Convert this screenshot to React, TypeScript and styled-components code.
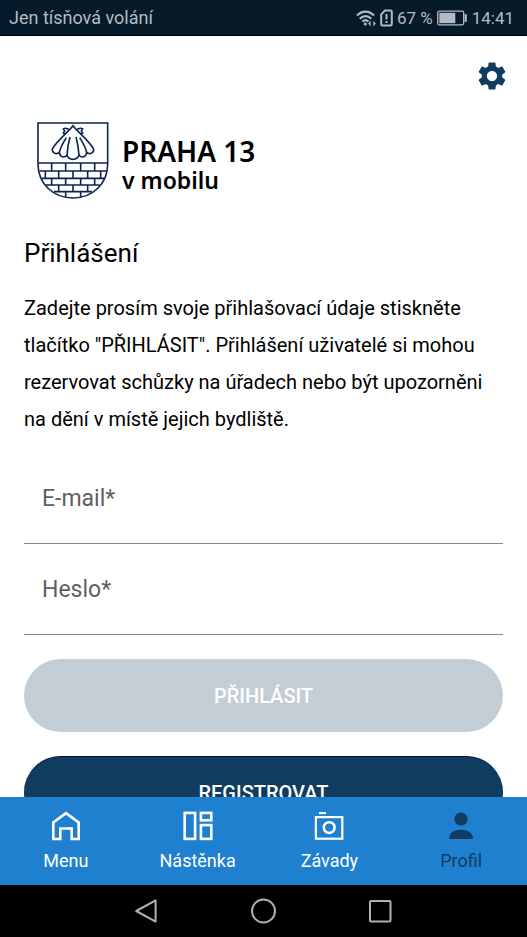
import React from "react";
import styled, { createGlobalStyle, css } from "styled-components";
import { MdSettings } from "react-icons/md";

const navy = "#103c60";
const blue = "#1f80cf";
const statusGrey = "#b4bac2";

const GlobalStyle = createGlobalStyle`
  *, *::before, *::after { box-sizing: border-box; }
  body { margin: 0; background: #fff; font-family: Roboto, sans-serif; color: #000; }
  button, input { font-family: inherit; }
`;

const Screen = styled.div`
  display: flex;
  flex-direction: column;
  height: 100vh;
`;

const StatusBar = styled.header`
  display: flex;
  flex: none;
  align-items: center;
  justify-content: space-between;
  height: 36px;
  padding: 0 13px 0 9px;
  border-bottom: 1px solid #000;
  background: #061a2a;
  color: ${statusGrey};
  font-size: 18px;
  line-height: 24px;
`;

const StatusItems = styled.div`
  display: flex;
  align-items: center;
  gap: 4px;
  font-size: 17px;
`;

const Content = styled.main`
  display: flex;
  flex: 1;
  flex-direction: column;
  min-height: 0;
  overflow-y: auto;
  scrollbar-width: none;
  padding: 23px 24px 24px;

  & > * { flex: none; }
`;

const SettingsButton = styled.button`
  display: grid;
  align-self: flex-end;
  margin-right: -6px;
  padding: 0;
  border: 0;
  background: none;
  color: ${navy};
  cursor: pointer;
`;

const Brand = styled.div`
  display: flex;
  align-items: center;
  gap: 13px;
  margin: 29px 0 0 13px;
`;

const BrandText = styled.div`
  display: flex;
  flex-direction: column;
  padding-top: 6px;
  font-family: "Noto Sans", sans-serif;
  font-weight: 600;
`;

const BrandName = styled.span`
  font-size: 28px;
  line-height: 32px;
`;

const BrandSub = styled.span`
  font-size: 23px;
  line-height: 26px;
`;

const Title = styled.h1`
  margin: 38px 0 0;
  font-size: 26px;
  font-weight: 400;
  line-height: 32px;
`;

const Intro = styled.p`
  margin: 21px 0 15px;
  font-size: 20px;
  line-height: 37px;
`;

const Form = styled.form`
  display: flex;
  flex-direction: column;
`;

const Field = styled.div`
  display: grid;
  grid-template-areas: "cell";
  height: 91px;
  padding-top: 2px;
  border-bottom: 1px solid #8a8a8a;
`;

const FieldInput = styled.input`
  grid-area: cell;
  width: 100%;
  padding: 0 18px;
  border: 0;
  outline: 0;
  background: none;
  font-size: 23px;
`;

const FieldLabel = styled.label`
  grid-area: cell;
  align-self: center;
  padding: 0 18px;
  color: #5f5f5f;
  font-size: 23px;
  line-height: 32px;
  pointer-events: none;

  ${FieldInput}:not(:placeholder-shown) + & {
    align-self: start;
    font-size: 16px;
  }
`;

const PillButton = styled.button<{ $variant: "muted" | "solid" }>`
  height: 73px;
  margin-top: 24px;
  padding: 0;
  border: 0;
  border-radius: 37px;
  color: #fff;
  font-size: 20px;
  font-weight: 500;
  line-height: 24px;
  ${({ $variant }) =>
    $variant === "muted"
      ? css`background: #c3cdd6;`
      : css`background: ${navy}; border-top: 1px solid #02104a; cursor: pointer;`}
`;

const TabBar = styled.nav`
  display: grid;
  flex: none;
  grid-template-columns: repeat(4, 1fr);
  height: 88px;
  background: ${blue};
`;

const Tab = styled.a<{ $active?: boolean }>`
  display: flex;
  flex-direction: column;
  align-items: center;
  gap: 8px;
  padding-top: 14px;
  color: ${({ $active }) => ($active ? navy : "#fff")};
  font-size: 18px;
  line-height: 24px;
  text-decoration: none;
`;

const SystemBar = styled.div`
  display: flex;
  flex: none;
  align-items: center;
  justify-content: center;
  gap: 89px;
  height: 52px;
  background: #000;
`;

const SystemButton = styled.button`
  display: grid;
  padding: 0;
  border: 0;
  background: none;
  color: #b0b0b0;
`;

const WifiIcon = () => (
  <svg width="20" height="18" viewBox="0 0 20 18" fill="none" stroke="currentColor" strokeWidth="2.2" aria-hidden="true">
    <path d="M1 6.5C6 1.2 13 1.2 18 6.5M3.8 9.8c3.5-3.6 8-3.6 11.4 0M6.5 12.6c2-1.9 4-1.9 6 0" />
    <circle cx="9.3" cy="15" r="1.6" fill="currentColor" stroke="none" />
    <path d="M12.2 14.6l2.4-2.8v5.6zM19.8 14.6l-2.4-2.8v5.6z" fill="currentColor" stroke="none" />
  </svg>
);

const SimIcon = () => (
  <svg width="13" height="18" viewBox="0 0 13 18" fill="none" stroke="currentColor" strokeWidth="2" aria-hidden="true">
    <path d="M5 1.5h5.5q1.3 0 1.3 1.3v12.4q0 1.3-1.3 1.3h-8q-1.3 0-1.3-1.3V5.3z" />
    <path d="M6.5 5v5.5M6.5 12v2" />
  </svg>
);

const BatteryIcon = () => (
  <svg width="31" height="16" viewBox="0 0 31 16" aria-hidden="true">
    <rect x="0.7" y="1.2" width="26" height="13.6" rx="1.5" fill="none" stroke="currentColor" strokeWidth="1.3" />
    <rect x="2.3" y="2.8" width="16" height="10.4" fill="currentColor" />
    <rect x="27.6" y="4.2" width="2.2" height="7.6" fill="currentColor" />
  </svg>
);

const Shield = () => (
  <svg width="72" height="77" viewBox="21 22 216 231" fill="none" stroke="#0d2350" strokeWidth="4.8" aria-hidden="true">
    <path d="M24 25H233V148C233 208 187 250 129 250S24 208 24 148Z" />
    <path d="M25 145H232M28 169H229M35 191H222M48 211H209M72 231H186" />
    <path d="M65 145v24M107 145v24M152 145v24M194 145v24M46 169v22M86 169v22M129 169v22M173 169v22M212 169v22M65 191v20M107 191v20M152 191v20M194 191v20M86 211v20M129 211v20M173 211v20M107 231v17M152 231v17" />
    <path d="M129 33C116 50 82 78 68 101C63 112 78 122 88 113C89 127 103 131 111 122C117 138 141 138 147 122C155 131 169 127 170 113C180 122 195 112 190 101C176 78 142 50 129 33Z" />
    <path d="M88 113C92 96 102 80 109 69M111 122C112 104 115 85 120 67M147 122C146 104 143 85 138 67M170 113C166 96 156 80 149 69" />
    <path d="M119 46C111 40 104 40 100 43L104 49L100 55L108 58M139 46C147 40 154 40 158 43L154 49L158 55L150 58" />
  </svg>
);

const HomeIcon = () => (
  <svg width="30" height="30" viewBox="0 0 30 30" fill="none" stroke="currentColor" strokeWidth="2.6" aria-hidden="true">
    <path d="M2.3 28V11.5L15 2.2L27.7 11.5V28H20.7V17.5H9.3V28Z" />
  </svg>
);

const BoardIcon = () => (
  <svg width="30" height="30" viewBox="0 0 30 30" fill="none" stroke="currentColor" strokeWidth="2.6" aria-hidden="true">
    <rect x="1.7" y="1.9" width="10.4" height="26" />
    <rect x="17.9" y="1.9" width="10.4" height="7.4" />
    <rect x="17.9" y="14.1" width="10.4" height="13.8" />
  </svg>
);

const CameraIcon = () => (
  <svg width="30" height="30" viewBox="0 0 30 30" fill="none" stroke="currentColor" strokeWidth="2.2" aria-hidden="true">
    <rect x="1.9" y="6.1" width="26.4" height="21.6" />
    <path d="M5 2.1h7" />
    <circle cx="15.2" cy="16.6" r="5.4" strokeWidth="2.6" />
  </svg>
);

const PersonIcon = () => (
  <svg width="30" height="30" viewBox="0 0 30 30" fill="currentColor" aria-hidden="true">
    <circle cx="15" cy="8" r="6.6" />
    <path d="M3 28C3 21.5 8 18.8 15 18.8S27 21.5 27 28Z" />
  </svg>
);

const tabs = [
  { label: "Menu", Icon: HomeIcon },
  { label: "Nástěnka", Icon: BoardIcon },
  { label: "Závady", Icon: CameraIcon },
  { label: "Profil", Icon: PersonIcon, active: true },
];

const systemButtons = [
  { label: "Zpět", shape: <path d="M3.2 13L22.6 2.4V23.6Z" /> },
  { label: "Domů", shape: <circle cx="13.5" cy="13" r="11.5" /> },
  { label: "Přehled", shape: <rect x="3" y="3" width="20.5" height="20.5" rx="1" /> },
];

const fields = [
  { id: "email", label: "E-mail*", type: "email" },
  { id: "password", label: "Heslo*", type: "password" },
];

export default function App() {
  return (
    <Screen>
      <GlobalStyle />
      <StatusBar>
        <span>Jen tísňová volání</span>
        <StatusItems>
          <WifiIcon />
          <SimIcon />
          <span>67 %</span>
          <BatteryIcon />
          <span>14:41</span>
        </StatusItems>
      </StatusBar>
      <Content>
        <SettingsButton type="button" aria-label="Nastavení">
          <MdSettings size={34} />
        </SettingsButton>
        <Brand>
          <Shield />
          <BrandText>
            <BrandName>PRAHA 13</BrandName>
            <BrandSub>v mobilu</BrandSub>
          </BrandText>
        </Brand>
        <Title>Přihlášení</Title>
        <Intro>
          Zadejte prosím svoje přihlašovací údaje stiskněte tlačítko "PŘIHLÁSIT". Přihlášení
          uživatelé si mohou rezervovat schůzky na úřadech nebo být upozorněni na dění v místě
          jejich bydliště.
        </Intro>
        <Form>
          {fields.map(({ id, label, type }) => (
            <Field key={id}>
              <FieldInput id={id} type={type} placeholder=" " />
              <FieldLabel htmlFor={id}>{label}</FieldLabel>
            </Field>
          ))}
          <PillButton $variant="muted" type="submit" disabled>
            PŘIHLÁSIT
          </PillButton>
          <PillButton $variant="solid" type="button">
            REGISTROVAT
          </PillButton>
        </Form>
      </Content>
      <TabBar>
        {tabs.map(({ label, Icon, active }) => (
          <Tab key={label} href="#" $active={active} aria-current={active ? "page" : undefined}>
            <Icon />
            {label}
          </Tab>
        ))}
      </TabBar>
      <SystemBar>
        {systemButtons.map(({ label, shape }) => (
          <SystemButton key={label} type="button" aria-label={label}>
            <svg width="28" height="26" viewBox="0 0 28 26" fill="none" stroke="currentColor" strokeWidth="2" strokeLinejoin="round">
              {shape}
            </svg>
          </SystemButton>
        ))}
      </SystemBar>
    </Screen>
  );
}
